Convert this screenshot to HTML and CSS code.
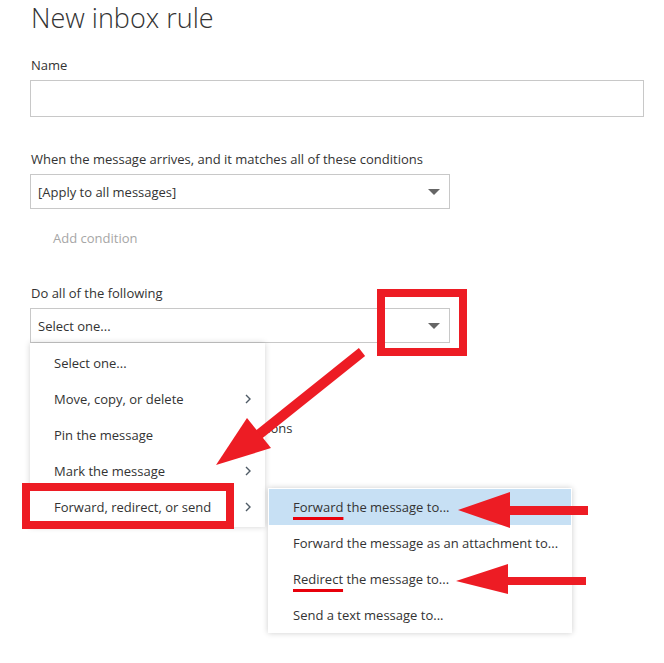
FILE: index.html
```html
<!DOCTYPE html>
<html lang="en">
<head>
    <meta charset="UTF-8">
    <meta name="viewport" content="width=device-width, initial-scale=1.0">
    <title>New inbox rule</title>
    <link rel="stylesheet" href="styles.css">
</head>
<body>

<div class="page">
    <h1 class="title">New inbox rule</h1>

    <!-- Name -->
    <div class="field field-name">
        <label class="label" for="ruleName">Name</label>
        <input class="text-input" type="text" id="ruleName">
    </div>

    <!-- Conditions -->
    <div class="field field-cond">
        <div class="label">When the message arrives, and it matches all of these conditions</div>
        <div class="select">
            <span>[Apply to all messages]</span>
            <span class="caret"></span>
        </div>
        <div class="add-link">Add condition</div>
    </div>

    <!-- Actions -->
    <div class="field field-action">
        <div class="label">Do all of the following</div>
        <div class="select select-open">
            <span>Select one...</span>
            <span class="caret"></span>
        </div>
        <div class="add-link">Add action</div>
    </div>

    <div class="field field-except">
        <div class="label">Except if it matches any of these conditions</div>
    </div>
</div>

<!-- Open dropdown menu -->
<div class="menu">
    <div class="menu-item">Select one...</div>
    <div class="menu-item">Move, copy, or delete <svg class="chev" viewBox="0 0 6 10"><polyline points="1,1 5,5 1,9"/></svg></div>
    <div class="menu-item">Pin the message</div>
    <div class="menu-item">Mark the message <svg class="chev" viewBox="0 0 6 10"><polyline points="1,1 5,5 1,9"/></svg></div>
    <div class="menu-item has-sub">Forward, redirect, or send <svg class="chev" viewBox="0 0 6 10"><polyline points="1,1 5,5 1,9"/></svg></div>
</div>
<div class="submenu">
    <div class="sub-item active"><span class="mark">Forward</span> the message to...</div>
    <div class="sub-item">Forward the message as an attachment to...</div>
    <div class="sub-item"><span class="mark">Redirect</span> the message to...</div>
    <div class="sub-item">Send a text message to...</div>
</div>

<!-- Annotations drawn over the screenshot -->
<div class="callout callout-caret"></div>
<div class="callout callout-item"></div>
<svg class="arrows" width="664" height="663" viewBox="0 0 664 663">
    <line x1="362" y1="352" x2="252" y2="440" stroke="#ed1c24" stroke-width="10"/>
    <polygon points="216,465 247,418 271,448" fill="#ed1c24"/>
    <polygon points="458,510 510,492 510,506 588,506 588,515 510,515 510,528" fill="#ed1c24"/>
    <polygon points="456,581 508,564 508,577 586,577 586,585 508,585 508,594" fill="#ed1c24"/>
</svg>

</body>
</html>
```

FILE: styles.css
```css
/* General styles */
html, body {
    min-height: 663px;
}

body {
    font-family: "Open Sans", "Noto Sans", sans-serif;
    font-size: 13px;
    color: #333;
    background-color: #fff;
    margin: 0;
    padding: 0;
    position: relative;
}

.page {
    padding-left: 30px;
    width: 614px;
}

.title {
    margin: 0;
    font-size: 27px;
    font-weight: 300;
    line-height: 36px;
    color: #333;
    padding-left: 1px;
}

.label {
    display: block;
    line-height: 18px;
    padding-left: 1px;
    margin-bottom: 6px;
}

.field-name {
    margin-top: 20px;
}

.text-input {
    display: block;
    box-sizing: border-box;
    width: 614px;
    height: 37px;
    margin: 0;
    border: 1px solid #c8c8c8;
    font: inherit;
}

.field-cond {
    margin-top: 33px;
}

/* Dropdowns */
.select {
    box-sizing: border-box;
    width: 420px;
    height: 35px;
    border: 1px solid #c8c8c8;
    display: flex;
    align-items: center;
    justify-content: space-between;
    padding: 0 8px 0 7px;
}

.caret {
    width: 0;
    height: 0;
    border-left: 6px solid transparent;
    border-right: 6px solid transparent;
    border-top: 6px solid #666;
    margin-right: 1px;
}

.add-link {
    color: #a6a6a6;
    padding-left: 23px;
    line-height: 18px;
    margin-top: 20px;
}

.field-action {
    margin-top: 37px;
}

.field-action .add-link {
    margin-top: 28px;
}

.field-except {
    margin-top: 30px;
}

/* Open menu */
.menu {
    position: absolute;
    top: 343px;
    left: 30px;
    width: 235px;
    padding: 2px 0;
    background-color: #fff;
    box-shadow: 0 0 6px rgba(0, 0, 0, 0.18);
    z-index: 2;
}

.menu-item {
    height: 36px;
    padding-left: 24px;
    padding-right: 14px;
    display: flex;
    align-items: center;
    justify-content: space-between;
}

.chev {
    width: 6px;
    height: 10px;
    fill: none;
    stroke: #4f5b66;
    stroke-width: 1.4;
}

.submenu {
    position: absolute;
    top: 488px;
    left: 268px;
    width: 304px;
    padding: 1px 0 0;
    background-color: #fff;
    box-shadow: 0 0 6px rgba(0, 0, 0, 0.2);
    z-index: 3;
}

.sub-item {
    height: 36px;
    line-height: 36px;
    padding-left: 24px;
    margin: 0 1px;
}

.sub-item.active {
    background-color: #c7e0f4;
}

.mark {
    text-decoration: underline;
    text-decoration-color: #e8000b;
    text-decoration-thickness: 3px;
    text-underline-offset: 5px;
}

/* Annotations */
.callout {
    position: absolute;
    border: 8px solid #ed1c24;
    box-sizing: border-box;
    z-index: 5;
}

.callout-caret {
    left: 377px;
    top: 289px;
    width: 90px;
    height: 67px;
}

.callout-item {
    left: 22px;
    top: 483px;
    width: 212px;
    height: 46px;
}

.arrows {
    position: absolute;
    left: 0;
    top: 0;
    z-index: 6;
    pointer-events: none;
}
```
